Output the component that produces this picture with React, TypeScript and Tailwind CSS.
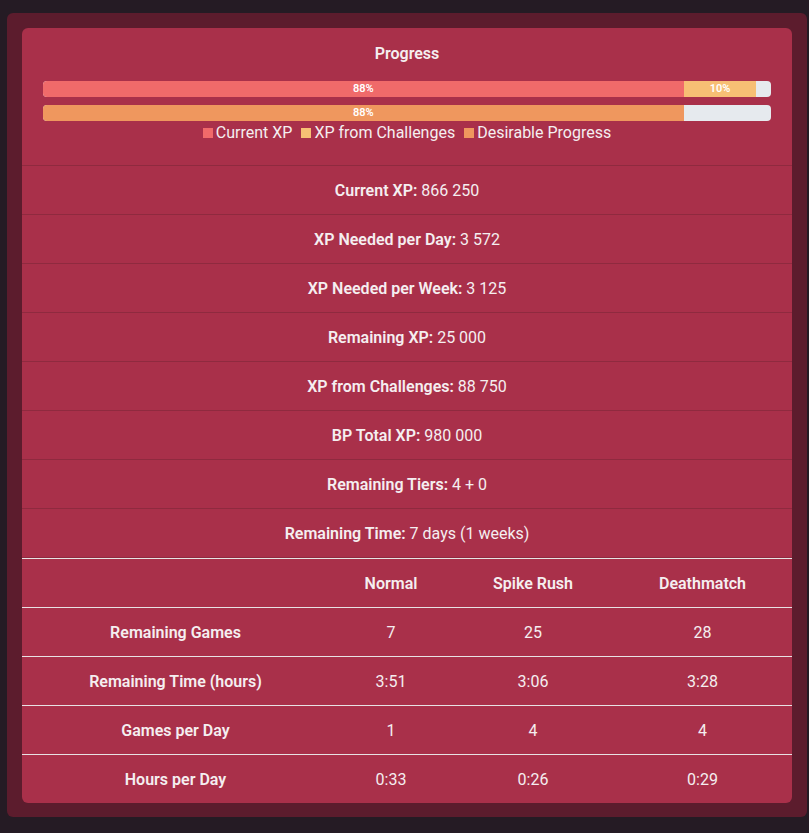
const STATS: [string, string][] = [
  ['Current XP:', '866 250'],
  ['XP Needed per Day:', '3 572'],
  ['XP Needed per Week:', '3 125'],
  ['Remaining XP:', '25 000'],
  ['XP from Challenges:', '88 750'],
  ['BP Total XP:', '980 000'],
  ['Remaining Tiers:', '4 + 0'],
  ['Remaining Time:', '7 days (1 weeks)'],
];

const MODES = ['Normal', 'Spike Rush', 'Deathmatch'];

const ROWS: [string, string[]][] = [
  ['Remaining Games', ['7', '25', '28']],
  ['Remaining Time (hours)', ['3:51', '3:06', '3:28']],
  ['Games per Day', ['1', '4', '4']],
  ['Hours per Day', ['0:33', '0:26', '0:29']],
];

const LEGEND = [
  { label: 'Current XP', color: 'bg-[#f06a6a]' },
  { label: 'XP from Challenges', color: 'bg-[#f7bf74]' },
  { label: 'Desirable Progress', color: 'bg-[#ef975e]' },
];

const App: React.FC = () => (
  <div className="min-h-screen bg-[#251b24] pb-[16px] pl-[7px] pr-[2px] pt-[13px] font-['Roboto','Liberation_Sans',sans-serif] text-[#f5eef0]">
    <div className="rounded-md bg-[#5c1c2d] p-[15px] pb-[14px]">
      <div className="overflow-hidden rounded-md bg-[#a9304a]">
        <section className="border-b border-[#8f2a3f] px-[21px] pb-[22px] pt-[14px]">
          <h2 className="text-center text-base font-semibold leading-6">Progress</h2>
          <div className="mt-[15px] flex h-4 overflow-hidden rounded bg-[#e6eaee] text-[11px] font-semibold leading-4 text-white">
            <div className="w-[88%] bg-[#f06a6a] text-center">88%</div>
            <div className="w-[10%] bg-[#f7bf74] text-center">10%</div>
          </div>
          <div className="mt-2 flex h-4 overflow-hidden rounded bg-[#e6eaee] text-[11px] font-semibold leading-4 text-white">
            <div className="w-[88%] bg-[#ef975e] text-center">88%</div>
          </div>
          <div className="mt-[2px] flex justify-center gap-[9px] text-base leading-5">
            {LEGEND.map((item) => (
              <span key={item.label} className="flex items-center gap-[3px]">
                <span className={`h-[10px] w-[10px] ${item.color}`} />
                {item.label}
              </span>
            ))}
          </div>
        </section>

        {STATS.map(([label, value]) => (
          <div key={label} className="border-b border-[#8f2a3f] pb-[11px] pt-[13px] text-center text-base leading-6">
            <span className="font-semibold">{label}</span> {value}
          </div>
        ))}

        <table className="w-full table-fixed border-collapse text-center text-base leading-6">
          <colgroup>
            <col className="w-[307px]" />
            <col className="w-[124px]" />
            <col className="w-[160px]" />
            <col className="w-[179px]" />
          </colgroup>
          <thead>
            <tr className="border-t border-[#e8e2e4]">
              <th className="pb-[11px] pt-[13px]" />
              {MODES.map((m) => (
                <th key={m} className="pb-[11px] pt-[13px] font-semibold">
                  {m}
                </th>
              ))}
            </tr>
          </thead>
          <tbody>
            {ROWS.map(([label, values]) => (
              <tr key={label} className="border-t border-[#e8e2e4]">
                <td className="pb-[11px] pt-[13px] font-semibold">{label}</td>
                {values.map((v, j) => (
                  <td key={j} className="pb-[11px] pt-[13px]">
                    {v}
                  </td>
                ))}
              </tr>
            ))}
          </tbody>
        </table>
      </div>
    </div>
  </div>
);

export default App;
